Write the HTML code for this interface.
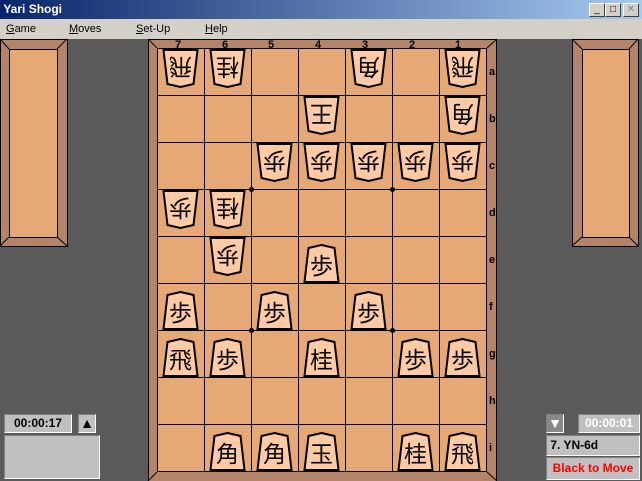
<!DOCTYPE html><html><head><style>
body{margin:0;width:642px;height:481px;overflow:hidden;background:#5a5a5a;font-family:"Liberation Sans",sans-serif}
.t{position:absolute;left:0;top:0;width:642px;height:19px;background:linear-gradient(90deg,#0a246a,#a6caf0);color:#fff;font-weight:bold;font-size:12px;line-height:19px}
.m{position:absolute;left:0;top:19px;width:642px;height:20px;background:#d4d0c8;font-size:11px;line-height:20px}
.m span{position:absolute;top:0}
.b{position:absolute;width:14px;height:12px;top:3px;background:#d4d0c8;border:1px solid;border-color:#fff #404040 #404040 #fff;font-size:10px;line-height:11px;text-align:center;color:#000}
.box{position:absolute;background:#c0c0c0;border:1px solid;border-color:#808080 #fff #fff #808080;font-size:12px;font-weight:bold}
</style></head><body>
<div class="t">&nbsp;Yari Shogi</div>
<div class="b" style="left:589px">_</div><div class="b" style="left:605px">□</div><div class="b" style="left:623px;color:#888">✕</div>
<div class="m"><span style="left:6px"><u>G</u>ame</span><span style="left:69px"><u>M</u>oves</span><span style="left:136px"><u>S</u>et-Up</span><span style="left:205px"><u>H</u>elp</span></div>
<svg width="642" height="481" style="position:absolute;left:0;top:0" font-family="Liberation Sans,Noto Sans CJK JP,sans-serif">
<g stroke="#000" stroke-width="1">
<rect x="0.5" y="39.5" width="67" height="207" fill="#b4846a"/><rect x="9.5" y="49.5" width="48" height="188" fill="#e6a874"/>
<path d="M0 39L9 49M67 39L57 49M0 246L9 237M67 246L57 237"/>
<rect x="572.5" y="39.5" width="66" height="207" fill="#b4846a"/><rect x="582.5" y="49.5" width="47" height="188" fill="#e6a874"/>
<path d="M572 39L582 49M638 39L629 49M572 246L582 237M638 246L629 237"/>
<rect x="148.5" y="39.5" width="348" height="445" fill="#b4846a"/>
<rect x="157.5" y="48.5" width="329" height="423" fill="#e6a874"/>
<path d="M148 39L157 48M497 39L487 48M148 481L157 472M497 481L487 472"/>
<path d="M204.5 48V472M251.5 48V472M298.5 48V472M345.5 48V472M392.5 48V472M439.5 48V472M157 95.5H487M157 142.5H487M157 189.5H487M157 236.5H487M157 283.5H487M157 330.5H487M157 377.5H487M157 424.5H487"/>
</g>
<g fill="#000"><circle cx="251.5" cy="189.5" r="2.5"/><circle cx="392.5" cy="189.5" r="2.5"/><circle cx="251.5" cy="330.5" r="2.5"/><circle cx="392.5" cy="330.5" r="2.5"/></g>
<g font-size="11" font-weight="bold" text-anchor="middle"><text x="178" y="48">7</text><text x="225" y="48">6</text><text x="271" y="48">5</text><text x="318" y="48">4</text><text x="365" y="48">3</text><text x="412" y="48">2</text><text x="458" y="48">1</text></g>
<g font-size="11" font-weight="bold"><text x="489" y="75">a</text><text x="489" y="122">b</text><text x="489" y="169">c</text><text x="489" y="216">d</text><text x="489" y="263">e</text><text x="489" y="310">f</text><text x="489" y="357">g</text><text x="489" y="404">h</text><text x="489" y="451">i</text></g>
<g id="p"></g>
</svg>
<div class="box" style="left:4px;top:414px;width:66px;height:17px;text-align:center;line-height:17px">00:00:17</div>
<div class="box" style="left:78px;top:414px;width:16px;height:17px;font-size:14px;text-align:center;line-height:16px">▲</div>
<div class="box" style="left:4px;top:435px;width:94px;height:42px"></div>
<div class="box" style="left:546px;top:414px;width:16px;height:17px;text-align:center;line-height:16px;color:#fff;font-size:14px;background:#888">▼</div>
<div class="box" style="left:578px;top:414px;width:60px;height:17px;text-align:center;line-height:17px;color:#fff">00:00:01</div>
<div class="box" style="left:546px;top:435px;width:92px;height:19px;line-height:19px">&nbsp;7. YN-6d</div>
<div class="box" style="left:546px;top:457px;width:92px;height:21px;line-height:20px;text-align:center;color:#f00">Black to Move</div>
<script>
var P=[[0,0,'飛',1],[1,0,'桂',1],[4,0,'角',1],[6,0,'飛',1],[3,1,'王',1],[6,1,'角',1],
[2,2,'歩',1],[3,2,'歩',1],[4,2,'歩',1],[5,2,'歩',1],[6,2,'歩',1],[0,3,'歩',1],[1,3,'桂',1],[1,4,'歩',1],[3,4,'歩',0],
[0,5,'歩',0],[2,5,'歩',0],[4,5,'歩',0],[0,6,'飛',0],[1,6,'歩',0],[3,6,'桂',0],[5,6,'歩',0],[6,6,'歩',0],
[1,8,'角',0],[2,8,'角',0],[3,8,'玉',0],[5,8,'桂',0],[6,8,'飛',0]];
var s='';P.forEach(function(q){var cx=157+47*q[0]+23.5,ty=48+47*q[1];
if(q[3]){s+='<polygon points="'+(cx-17)+','+(ty+2)+' '+(cx+17)+','+(ty+2)+' '+(cx+13)+','+(ty+36)+' '+cx+','+(ty+39)+' '+(cx-13)+','+(ty+36)+'" fill="#ffcaa4" stroke="#000" stroke-width="2"/><text x="'+cx+'" y="'+(ty+19)+'" font-size="23" text-anchor="middle" transform="rotate(180 '+cx+' '+(ty+19)+')" dy="8">'+q[2]+'</text>';}
else{s+='<polygon points="'+cx+','+(ty+9)+' '+(cx+13)+','+(ty+12)+' '+(cx+17)+','+(ty+46)+' '+(cx-17)+','+(ty+46)+' '+(cx-13)+','+(ty+12)+'" fill="#ffcaa4" stroke="#000" stroke-width="2"/><text x="'+cx+'" y="'+(ty+38)+'" font-size="23" text-anchor="middle">'+q[2]+'</text>';}});
document.getElementById('p').innerHTML=s;
</script>
</body></html>
